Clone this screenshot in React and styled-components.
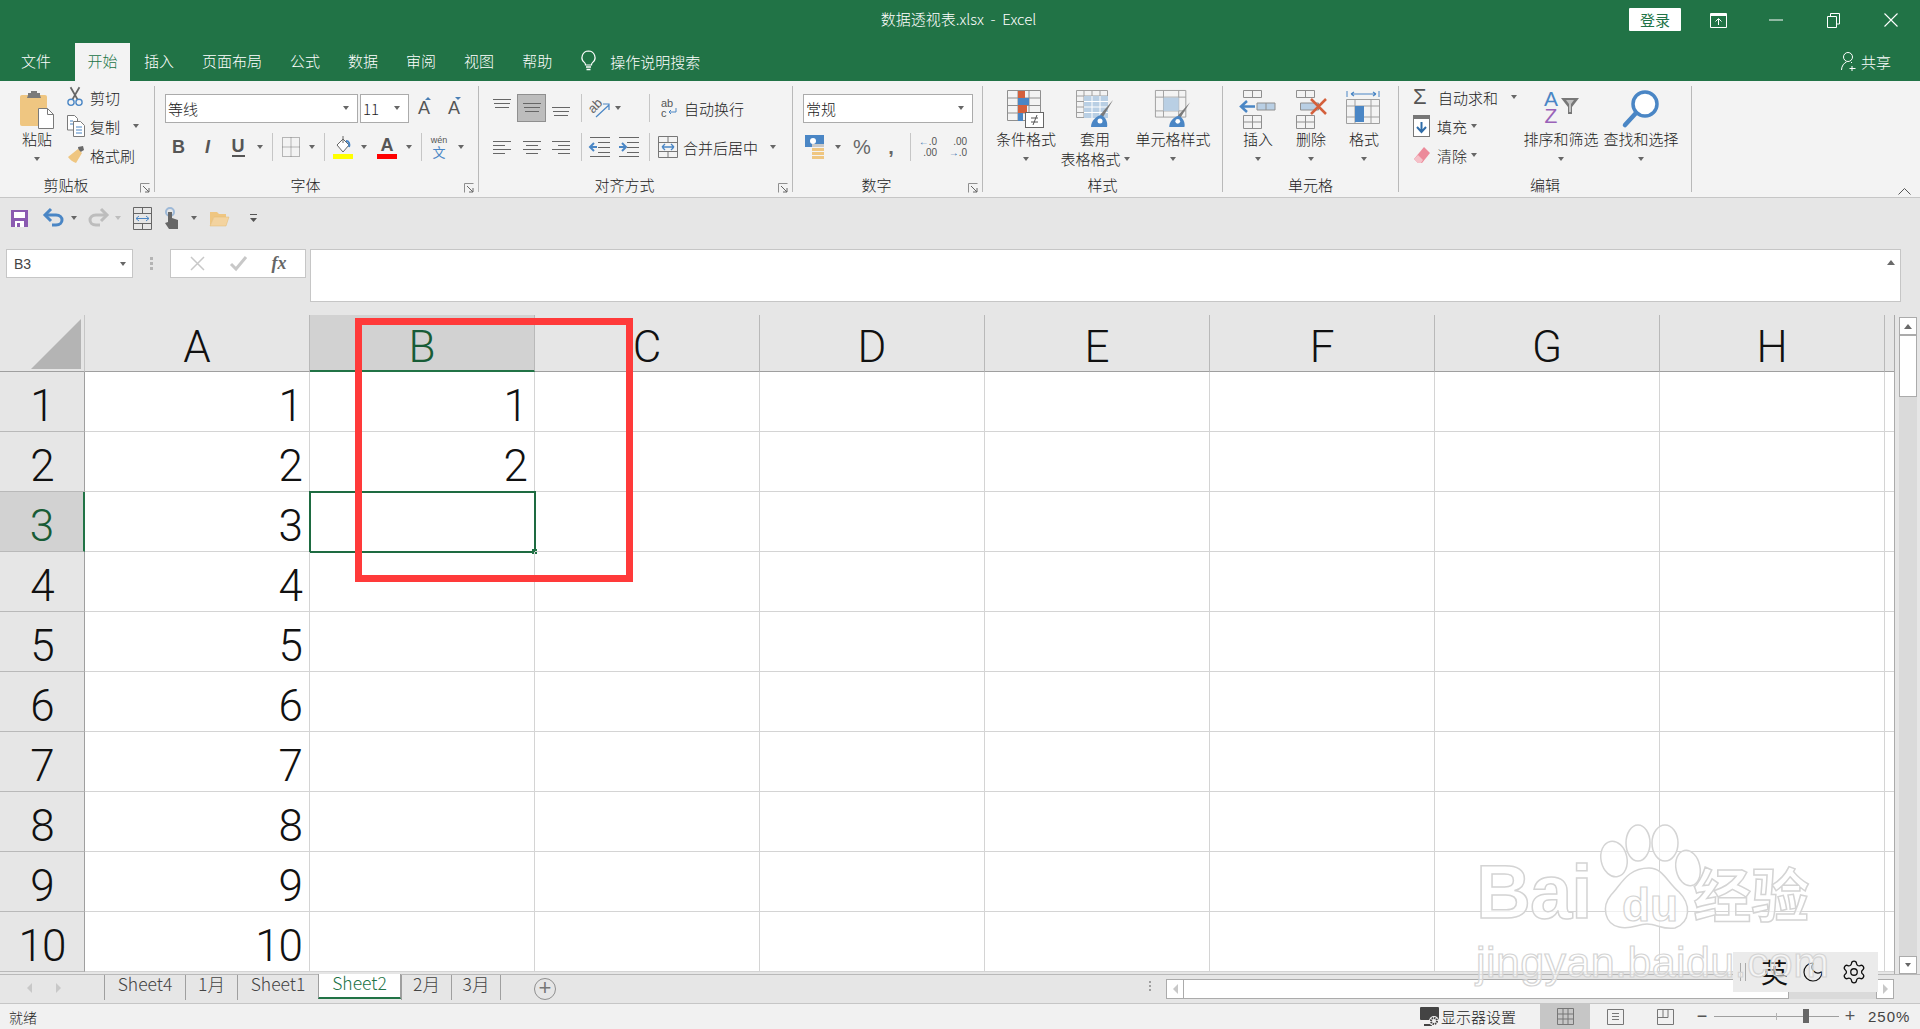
import React from 'react';
import styled, { createGlobalStyle } from 'styled-components';
import { Settings, Moon } from 'lucide-react';

const GlobalStyle = createGlobalStyle`
  html, body { margin: 0; padding: 0; background: #e6e6e6; }
  body { font-family: "Noto Sans CJK SC", "Liberation Sans", sans-serif; font-size: 15px; color: #222; }
  * { box-sizing: border-box; }
  svg { display: block; flex: none; overflow: visible; }
`;

const Page = styled.div`
  position: relative;
  width: 1920px;
  height: 1029px;
  overflow: hidden;
  display: flex;
  flex-direction: column;
  background: #e6e6e6;
`;

/* title bar */
const TitleBar = styled.header`
  height: 43px;
  background: #217346;
  color: #fff;
  display: flex;
  align-items: flex-start;
  position: relative;
`;
const TitleText = styled.div`
  width: 1630px;
  padding-left: 288px;
  text-align: center;
  line-height: 20px;
  padding-top: 9px;
  font-size: 15px;
  font-weight: 300;
  white-space: pre;
`;
const Login = styled.button`
  width: 52px;
  height: 23px;
  margin-top: 8px;
  border: 0;
  border-radius: 1px;
  background: #fff;
  color: #217346;
  font: inherit;
  line-height: 23px;
  padding: 0;
`;
const WinButtons = styled.div`
  display: flex;
  margin-left: 9px;
  margin-top: 8px;
`;
const WinButton = styled.div`
  width: 57.5px;
  height: 24px;
  display: flex;
  align-items: center;
  justify-content: center;
`;

/* tabs */
const TabRow = styled.nav`
  height: 38px;
  background: #217346;
  display: flex;
  padding-left: 7px;
  color: #fff;
`;
const Tab = styled.div`
  height: 38px;
  line-height: 35px;
  padding: 0 ${p => (p.$active ? 12.5 : 14)}px;
  margin-right: ${p => p.$mr || 0}px;
  background: ${p => (p.$active ? '#f3f3f3' : 'transparent')};
  color: ${p => (p.$active ? '#217346' : '#fff')};
  font-weight: 300;
  flex: none;
`;
const SearchHint = styled.div`
  display: flex;
  align-items: center;
  gap: 14px;
  margin-left: 15px;
  height: 36px;
  font-weight: 300;
`;
const Share = styled.div`
  margin-left: auto;
  margin-right: 29px;
  display: flex;
  align-items: center;
  gap: 4px;
  height: 36px;
  font-weight: 300;
`;

/* ribbon */
const Ribbon = styled.div`
  height: 117px;
  background: #f3f3f3;
  border-bottom: 1px solid #c6c6c6;
  padding-top: 5px;
  display: flex;
  flex: none;
`;
const Group = styled.section`
  position: relative;
  flex: none;
  width: ${p => p.$w}px;
  height: 106px;
  border-right: 1px solid #b9b9b9;
  display: flex;
  flex-direction: column;
`;
const Tools = styled.div`
  height: 90px;
  padding-left: ${p => p.$pad || 0}px;
  padding-top: ${p => p.$top || 0}px;
  display: flex;
  flex-direction: ${p => (p.$col ? 'column' : 'row')};
  gap: ${p => (p.$col ? 11 : 0)}px;
`;
const GroupLabel = styled.div`
  height: 16px;
  line-height: 18px;
  text-align: center;
  font-weight: 300;
  padding-right: ${p => (p.$launcher ? 22 : 0)}px;
`;
const Launcher = styled.div`
  position: absolute;
  right: 4px;
  bottom: -1px;
  width: 10px;
  height: 10px;
`;
const Row = styled.div`
  display: flex;
  align-items: center;
  height: 28px;
`;
const Slot = styled.div`
  flex: none;
  width: ${p => p.$w}px;
  height: 28px;
  display: flex;
  align-items: center;
  justify-content: center;
  color: #555;
  background: ${p => (p.$on ? '#bdbdbd' : 'transparent')};
  border: ${p => (p.$on ? '1px solid #8f8f8f' : '0')};
`;
const Caret = styled.i`
  display: block;
  flex: none;
  width: 0;
  height: 0;
  border-left: 3.5px solid transparent;
  border-right: 3.5px solid transparent;
  border-top: 4px solid ${p => (p.$faint ? '#bdbdbd' : '#666')};
`;
const Sep = styled.div`
  flex: none;
  width: ${p => p.$w}px;
  height: 28px;
  display: flex;
  justify-content: center;
  &::before {
    content: '';
    width: 1px;
    background: #c6c6c6;
  }
`;
const Select = styled.div`
  flex: none;
  width: ${p => p.$w}px;
  height: 29px;
  margin-right: ${p => p.$mr || 0}px;
  background: #fff;
  border: 1px solid #ababab;
  display: flex;
  align-items: center;
  justify-content: space-between;
  padding: 0 8px 0 2px;
  font-weight: 300;
`;
const BigButton = styled.div`
  flex: none;
  width: ${p => p.$w}px;
  padding-top: 4px;
  display: flex;
  flex-direction: column;
  align-items: center;
  font-weight: 300;
`;
const BigIcon = styled.div`
  height: 39px;
  display: flex;
  align-items: flex-start;
  justify-content: center;
`;
const BigLabel = styled.div`
  line-height: 20px;
  text-align: center;
  white-space: nowrap;
  display: flex;
  align-items: center;
  gap: 3px;
`;
const CaretLine = styled.div`
  height: 18px;
  margin-top: 1px;
  display: flex;
  align-items: center;
`;
const Stack = styled.div`
  flex: none;
  width: ${p => p.$w}px;
  margin: -1px 0 0 ${p => p.$ml || 0}px;
  display: flex;
  flex-direction: column;
  gap: 5px;
`;
const SmallRow = styled.div`
  height: 24px;
  display: flex;
  align-items: center;
  font-weight: 300;
`;
const SmallIcon = styled.div`
  flex: none;
  width: ${p => p.$w || 23}px;
  display: flex;
  justify-content: flex-start;
`;
const CaretGap = styled.span`
  display: block;
  margin-left: ${p => p.$ml || 4}px;
`;
const WrapText = styled.span`
  margin-left: ${p => p.$ml || 2}px;
  font-weight: 300;
  white-space: nowrap;
  color: #222;
`;
const FontBtn = styled.span`
  font-family: "Liberation Sans", sans-serif;
  font-weight: 700;
  font-size: 18px;
  font-style: ${p => (p.$i ? 'italic' : 'normal')};
  border-bottom: ${p => (p.$u ? '2px solid #555' : '0')};
  line-height: ${p => (p.$u ? '17px' : '20px')};
  color: #555;
`;
const GrowA = styled.span`
  position: relative;
  font-family: "Liberation Sans", sans-serif;
  font-size: 18px;
  color: #555;
  &::after {
    content: '';
    position: absolute;
    top: -1px;
    right: -1px;
    border-left: 3px solid transparent;
    border-right: 3px solid transparent;
    ${p => (p.$down ? 'border-top: 3px solid #4a7fb5;' : 'border-bottom: 3px solid #4a7fb5;')}
  }
`;
const ColorPick = styled.div`
  width: 20px;
  display: flex;
  flex-direction: column;
  align-items: center;
  font-family: "Liberation Sans", sans-serif;
  font-weight: 700;
  font-size: 18px;
  line-height: 18px;
  color: #555;
  &::after {
    content: '';
    width: 20px;
    height: 5px;
    background: ${p => p.$color};
  }
`;
const Wen = styled.div`
  display: flex;
  flex-direction: column;
  align-items: center;
  color: #4a86c5;
  font-size: 13px;
  line-height: 14px;
  small {
    font-size: 9px;
    line-height: 9px;
    color: #555;
    font-family: "Liberation Sans", sans-serif;
  }
`;
const NumSign = styled.span`
  font-family: "Liberation Sans", sans-serif;
  font-size: ${p => p.$s || 19}px;
  font-weight: ${p => p.$b || 400};
  color: #666;
`;
const Decimal = styled.div`
  font-family: "Liberation Sans", sans-serif;
  font-size: 10px;
  line-height: 11px;
  color: #555;
  text-align: right;
  b { font-weight: 700; color: #4a7fb5; font-size: 10px; }
  em { font-weight: 700; font-style: normal; color: #2f6ca8; font-size: 10px; }
`;
const Sigma = styled.span`
  font-family: "Liberation Sans", sans-serif;
  font-size: 22px;
  line-height: 24px;
  color: #555;
`;
const Collapse = styled.div`
  margin-left: auto;
  margin-right: 9px;
  align-self: flex-end;
  margin-bottom: 2px;
`;

/* quick access */
const QuickBar = styled.div`
  height: 40px;
  padding-left: 7px;
  display: flex;
  align-items: center;
  flex: none;
`;
const QuickSlot = styled.div`
  flex: none;
  width: ${p => p.$w}px;
  margin-left: ${p => p.$ml || 0}px;
  display: flex;
  align-items: center;
  justify-content: center;
`;

/* formula bar */
const FormulaRow = styled.div`
  height: 53px;
  margin: 11px 0 13px;
  padding-left: 6px;
  display: flex;
  align-items: flex-start;
  flex: none;
`;
const NameBox = styled.div`
  width: 127px;
  height: 29px;
  background: #fff;
  border: 1px solid #c6c6c6;
  display: flex;
  align-items: center;
  justify-content: space-between;
  padding: 0 6px 0 7px;
  font-family: "Liberation Sans", sans-serif;
  font-size: 14px;
  color: #444;
`;
const Dots = styled.div`
  width: 37px;
  height: 29px;
  display: flex;
  flex-direction: column;
  align-items: center;
  justify-content: center;
  gap: 2px;
  i {
    width: 3px;
    height: 3px;
    background: #b4b4b4;
  }
`;
const FxBox = styled.div`
  width: 136px;
  height: 29px;
  background: #fff;
  border: 1px solid #c6c6c6;
  display: flex;
  align-items: center;
  justify-content: space-around;
  padding: 0 6px;
  font-family: "Liberation Serif", serif;
  font-style: italic;
  font-weight: 700;
  font-size: 18px;
  color: #666;
`;
const FormulaInput = styled.div`
  width: 1591px;
  height: 53px;
  margin-left: 4px;
  background: #fff;
  border: 1px solid #c6c6c6;
  display: flex;
  justify-content: flex-end;
  padding: 10px 5px 0 0;
`;
const UpCaret = styled.i`
  display: block;
  width: 0;
  height: 0;
  border-left: 4.5px solid transparent;
  border-right: 4.5px solid transparent;
  border-bottom: 5px solid #6a6a6a;
`;

/* sheet */
const SheetArea = styled.div`
  height: 659px;
  display: flex;
  flex: none;
`;
const Grid = styled.div`
  width: 1895px;
  height: 659px;
  border-right: 1px solid #ababab;
  overflow: hidden;
`;
const GridRow = styled.div`
  display: flex;
  height: ${p => (p.$head ? 57 : 60)}px;
  background: ${p => (p.$head ? '#e6e6e6' : '#fff')};
`;
const Corner = styled.div`
  flex: none;
  width: 85px;
  height: 57px;
  border-right: 1px solid #c6c6c6;
  border-bottom: 1px solid #9f9f9f;
  padding: 4px 0 0 31px;
`;
const ColHead = styled.div`
  flex: none;
  width: ${p => p.$w || 225}px;
  height: 57px;
  padding-top: 7px;
  text-align: center;
  line-height: 50px;
  font-size: 44px;
  font-family: Roboto, "Liberation Sans", sans-serif;
  font-weight: 300;
  color: ${p => (p.$sel ? '#185c36' : '#111')};
  background: ${p => (p.$sel ? '#d2d2d2' : 'transparent')};
  border-right: 1px solid #b9b9b9;
  border-bottom: ${p => (p.$sel ? '2px solid #217346' : '1px solid #9f9f9f')};
`;
const RowHead = styled.div`
  flex: none;
  width: 85px;
  height: 60px;
  text-align: center;
  line-height: 60px;
  padding-top: 4px;
  font-size: 44px;
  font-family: Roboto, "Liberation Sans", sans-serif;
  font-weight: 300;
  letter-spacing: -1px;
  color: ${p => (p.$sel ? '#185c36' : '#111')};
  background: ${p => (p.$sel ? '#d2d2d2' : '#e6e6e6')};
  border-right: ${p => (p.$sel ? '2px solid #217346' : '1px solid #9f9f9f')};
  border-bottom: 1px solid #b9b9b9;
`;
const Cell = styled.div`
  position: relative;
  flex: none;
  width: ${p => p.$w || 225}px;
  height: 60px;
  padding: 4px 7px 0 0;
  text-align: right;
  line-height: 60px;
  font-size: 44px;
  font-family: Roboto, "Liberation Sans", sans-serif;
  font-weight: 300;
  letter-spacing: -1px;
  color: #111;
  border-right: 1px solid #d4d4d4;
  border-bottom: 1px solid #d4d4d4;
`;
const Selection = styled.div`
  position: absolute;
  left: -1px;
  top: -1px;
  width: 227px;
  height: 62px;
  border: 2px solid #1e6b41;
  &::after {
    content: '';
    position: absolute;
    right: -3px;
    bottom: -3px;
    width: 5px;
    height: 5px;
    background: #217346;
  }
`;
const VScroll = styled.div`
  flex: none;
  width: 18px;
  height: 657px;
  margin: 2px 0 0 4px;
  background: #dadada;
  display: flex;
  flex-direction: column;
`;
const ScrollBtn = styled.div`
  flex: none;
  width: ${p => p.$w || 18}px;
  height: ${p => p.$h || 18}px;
  background: #fff;
  border: 1px solid #ababab;
  display: flex;
  align-items: center;
  justify-content: center;
`;
const VThumb = styled.div`
  width: 18px;
  height: 62px;
  background: #fff;
  border: 1px solid #ababab;
  margin-bottom: auto;
`;

/* sheet tabs */
const TabBar = styled.div`
  height: 29px;
  flex: none;
  border-top: 1px solid #b9b9b9;
  display: flex;
  align-items: flex-start;
`;
const SheetNav = styled.div`
  width: 104px;
  height: 25px;
  padding-left: 27px;
  display: flex;
  align-items: center;
  gap: 24px;
  flex: none;
`;
const NavArrow = styled.i`
  display: block;
  width: 0;
  height: 0;
  border-top: 5px solid transparent;
  border-bottom: 5px solid transparent;
  ${p => (p.$left ? 'border-right: 5px solid #c8c8c8;' : 'border-left: 5px solid #c8c8c8;')}
`;
const SheetTab = styled.div`
  flex: none;
  width: ${p => p.$w}px;
  height: 25px;
  text-align: center;
  line-height: 18px;
  font-size: 17.5px;
  font-weight: 300;
  color: ${p => (p.$active ? '#217346' : '#444')};
  background: ${p => (p.$active ? '#fff' : 'transparent')};
  border-left: 1px solid #9f9f9f;
  border-right: ${p => (p.$last || p.$active ? '1px solid #9f9f9f' : '0')};
  border-bottom: ${p => (p.$active ? '2px solid #217346' : '0')};
  margin-top: ${p => (p.$active ? -1 : 0)}px;
`;
const AddSheet = styled.div`
  flex: none;
  margin: 3px 0 0 33px;
  width: 22px;
  height: 22px;
  border-radius: 50%;
  border: 1px solid #8f8f8f;
  color: #777;
  text-align: center;
  line-height: 18px;
  font-family: "Liberation Sans", sans-serif;
  font-size: 22px;
`;
const SplitDots = styled.div`
  margin-left: 585px;
  margin-top: 6px;
  display: flex;
  flex-direction: column;
  gap: 2px;
  width: 25px;
  padding-right: 7px;
  align-items: center;
  i {
    width: 2px;
    height: 2px;
    background: #9f9f9f;
  }
`;
const HScroll = styled.div`
  margin-left: 0;
  margin-top: 4px;
  width: 728px;
  height: 20px;
  display: flex;
  background: #dadada;
`;
const HThumb = styled.div`
  width: 605px;
  height: 20px;
  background: #fff;
  border: 1px solid #ababab;
  border-left: 0;
  margin-right: auto;
`;

/* status bar */
const StatusBar = styled.footer`
  height: 26px;
  flex: none;
  background: #f1f1f1;
  border-top: 1px solid #c6c6c6;
  display: flex;
  align-items: center;
  padding-left: 9px;
  font-weight: 300;
`;
const Ready = styled.div`
  width: 1411px;
  font-size: 14px;
`;
const Display = styled.div`
  width: 120px;
  display: flex;
  align-items: center;
  gap: 1px;
  white-space: nowrap;
`;
const ViewBtn = styled.div`
  flex: none;
  width: ${p => p.$w || 50}px;
  height: 25px;
  background: ${p => (p.$on ? '#c6c6c6' : 'transparent')};
  display: flex;
  align-items: center;
  justify-content: center;
`;
const ZoomSign = styled.div`
  flex: none;
  width: ${p => p.$w}px;
  text-align: center;
  font-family: "Liberation Sans", sans-serif;
  font-size: 18px;
  color: #555;
`;
const Slider = styled.div`
  position: relative;
  flex: none;
  width: 125px;
  height: 1px;
  background: #9f9f9f;
  &::before {
    content: '';
    position: absolute;
    left: 62px;
    top: -3px;
    width: 1px;
    height: 7px;
    background: #b4b4b4;
  }
  &::after {
    content: '';
    position: absolute;
    left: 89px;
    top: -7px;
    width: 6px;
    height: 14px;
    background: #666;
  }
`;
const ZoomValue = styled.div`
  margin-left: 7px;
  font-family: "Liberation Sans", sans-serif;
  font-size: 15px;
  letter-spacing: 1px;
  color: #444;
`;

/* overlays */
const RedFrame = styled.div`
  position: absolute;
  left: 355px;
  top: 318px;
  width: 278px;
  height: 264px;
  border: 7px solid #ff3a3a;
`;
const ImeBar = styled.div`
  position: absolute;
  left: 1733px;
  top: 952px;
  width: 145px;
  height: 40px;
  background: #ebebeb;
  display: flex;
  align-items: center;
  padding-left: 7px;
  color: #111;
`;
const ImeBars = styled.div`
  width: 6px;
  height: 18px;
  border-left: 1px solid #aaa;
  border-right: 1px solid #aaa;
`;
const ImeChar = styled.div`
  margin-left: 15px;
  width: 40px;
  font-size: 27px;
  line-height: 40px;
`;
const ImeIcon = styled.div`
  margin-left: ${p => p.$ml}px;
`;
const Watermark = styled.div`
  position: absolute;
  left: 1476px;
  top: 824px;
  width: 345px;
  height: 165px;
  pointer-events: none;
`;
const MarkLogo = styled.div`
  display: flex;
  align-items: flex-end;
  height: 108px;
`;
const MarkLatin = styled.div`
  font-family: "Liberation Sans", sans-serif;
  font-weight: 700;
  font-size: 76px;
  line-height: 80px;
  letter-spacing: -1px;
  color: rgba(255, 255, 255, 0.65);
  -webkit-text-stroke: 1.5px #d4d4d4;
`;
const MarkCjk = styled.div`
  font-family: "Noto Sans CJK SC", sans-serif;
  font-weight: 700;
  font-size: 58px;
  line-height: 80px;
  margin-left: -10px;
  color: rgba(255, 255, 255, 0.65);
  -webkit-text-stroke: 1.5px #d4d4d4;
`;
const MarkUrl = styled.div`
  margin-top: 8px;
  font-family: "Liberation Sans", sans-serif;
  font-size: 43px;
  line-height: 44px;
  letter-spacing: 0.4px;
  white-space: nowrap;
  color: rgba(255, 255, 255, 0.55);
  -webkit-text-stroke: 1.2px #d4d4d4;
`;

/* icons */
const G = '#7a7a7a';
const B = '#4a86c5';

const PasteIcon = () => (
  <svg width="36" height="40" viewBox="0 0 36 40">
    <rect x="1" y="5" width="27" height="31" rx="2" fill="#efc681" />
    <path d="M9 5V3h3V1h6v2h3v2l1 3H8z" fill={G} />
    <path d="M19.500 18.500h9l6 6v14h-15z" fill="#fff" stroke={G} />
    <path d="M28.500 18.500v6h6" fill="none" stroke={G} />
  </svg>
);
const ScissorsIcon = () => (
  <svg width="16" height="22" viewBox="0 0 18 24">
    <path d="M4 1l8 14M14 1L6 15" stroke="#666" strokeWidth="2" fill="none" />
    <circle cx="4.500" cy="18" r="3.500" fill="none" stroke={B} strokeWidth="1.500" />
    <circle cx="13.500" cy="18" r="3.500" fill="none" stroke={B} strokeWidth="1.500" />
  </svg>
);
const CopyIcon = () => (
  <svg width="18" height="22" viewBox="0 0 18 22">
    <path d="M.5.5h7l3 3V15H.5z" fill="#fff" stroke={G} />
    <path d="M6.500 6.500h7l4 4v11h-11z" fill="#fff" stroke={G} />
    <path d="M3 6h3M3 9h3M9 12h6M9 15h6M9 18h6" stroke={B} />
  </svg>
);
const BrushIcon = () => (
  <svg width="18" height="20" viewBox="0 0 18 20">
    <path d="M11 2l5-1 1 4-5 3z" fill="#6a6a6a" />
    <path d="M11 4l4 4-6 10c-3-1-6-3-8-6z" fill="#efc681" />
  </svg>
);
const BorderIcon = () => (
  <svg width="18" height="20" viewBox="0 0 18 20">
    <path d="M.5.500h17v19H.5zM9 .5v19M.5 10h17" fill="none" stroke="#777" strokeDasharray="1 1" />
  </svg>
);
const FillIcon = () => (
  <svg width="20" height="24" viewBox="0 0 20 24">
    <path d="M4 10l6-6 6 6-6 7z" fill="#fff" stroke="#666" />
    <path d="M10 1v7" stroke="#666" />
    <path d="M13 6c3 0 4 3 3 6" stroke={B} strokeWidth="2" fill="none" />
    <rect y="19" width="20" height="5" fill="#ffff00" />
  </svg>
);
const LinesIcon = ({ mode = 'center', w = 18 }) => {
  const wid = [w, w - 6, w, w - 6];
  return (
    <svg width={w} height="14" viewBox={`0 0 ${w} 14`}>
      {wid.map((v, i) => {
        const x = mode === 'left' ? 0 : mode === 'right' ? w - v : (w - v) / 2;
        return <rect key={i} x={x} y={i * 4 + 1} width={v} height="1" fill="#666" />;
      })}
    </svg>
  );
};
const StackLines = ({ offset = 0, w = 18 }) => (
  <svg width={w} height="26" viewBox={`0 0 ${w} 26`}>
    {[0, 1, 2].map(i => (
      <rect key={i} x={i === 1 ? 1 : i === 2 ? 2 : 0} y={offset + i * 4} width={i === 2 ? w - 4 : i === 1 ? w - 2 : w} height="1" fill="#666" />
    ))}
  </svg>
);
const OrientIcon = () => (
  <svg width="24" height="22" viewBox="0 0 24 22">
    <text x="3" y="14" fontSize="13" fontFamily="Liberation Sans" fill="#666" transform="rotate(-45 8 12)">ab</text>
    <path d="M9 20L22 8M16 7h6v6" stroke={B} fill="none" strokeWidth="1.200" />
  </svg>
);
const IndentIcon = ({ right }) => (
  <svg width="20" height="20" viewBox="0 0 20 20">
    <path d="M0 .5h20M8 5.500h12M8 10.500h12M8 15.500h12M0 19.500h20" stroke="#666" />
    <path d={right ? 'M0 10h6M3 6l4 4-4 4' : 'M7 10H1M4 6l-4 4 4 4'} stroke={B} strokeWidth="2" fill="none" />
  </svg>
);
const MergeIcon = () => (
  <svg width="20" height="22" viewBox="0 0 20 22">
    <path d="M.5.500h19v21H.5zM.5 6.500h19M.5 15.500h19M10 .5v6M10 15.500v6" fill="none" stroke="#777" />
    <path d="M4 11h12M4 11l3-3M4 11l3 3M16 11l-3-3M16 11l-3 3" stroke={B} strokeWidth="1.300" fill="none" />
  </svg>
);
const WrapIcon = () => (
  <svg width="18" height="20" viewBox="0 0 18 20">
    <text x="1" y="9" fontSize="11" fontFamily="Liberation Sans" fill="#555">ab</text>
    <text x="1" y="19" fontSize="11" fontFamily="Liberation Sans" fill="#555">c</text>
    <path d="M16 10v4H9M11 12l-2 2 2 2" stroke={B} fill="none" />
  </svg>
);
const MoneyIcon = () => (
  <svg width="20" height="24" viewBox="0 0 20 24">
    <rect width="19" height="12" fill={B} />
    <circle cx="8" cy="6" r="3" fill="#fff" />
    <rect x="7" y="9" width="12" height="3" fill="#c9c9c9" />
    <rect x="7" y="13" width="12" height="3" fill="#efc681" />
    <rect x="7" y="17" width="12" height="3" fill="#efc681" />
    <rect x="7" y="21" width="12" height="3" fill="#efc681" />
  </svg>
);
const CondIcon = () => (
  <svg width="38" height="38" viewBox="0 0 38 38">
    <path d="M.5.500h33v30H.5zM.5 8h33M.5 15.500h33M.5 23h33M11 .5v30M22 .5v30" fill="none" stroke="#8f8f8f" />
    <rect x="11" y="1" width="7" height="7" fill="#d4603c" />
    <rect x="11" y="8" width="11" height="7" fill={B} />
    <rect x="11" y="15" width="9" height="8" fill="#d4603c" />
    <rect x="11" y="23" width="5" height="8" fill={B} />
    <rect x="18.500" y="22.500" width="18" height="15" fill="#fff" stroke="#666" />
    <path d="M24 32h7M24 28h7M30 25l-4 10" stroke="#555" fill="none" />
  </svg>
);
const TableIcon = () => (
  <svg width="38" height="38" viewBox="0 0 38 38">
    <path d="M.5.500h31v27H.5zM.5 6h31M.5 11.500h31M.5 17h31M.5 22.500h31M8 .5v27M16 .5v27M24 .5v27" fill="none" stroke="#9f9f9f" />
    <rect x="8" y="6" width="24" height="22" fill="#b9cfe4" />
    <path d="M16 6v22M24 6v22M8 11.500h24M8 17h24M8 22.500h24" stroke="#fff" />
    <path d="M37 10L27 27l-3-2z" fill={G} />
    <path d="M25 25c-5 1-10 6-10 12h16c1-4-1-10-6-12z" fill={B} />
    <circle cx="24" cy="31" r="2.500" fill="#fff" />
  </svg>
);
const CellStyleIcon = () => (
  <svg width="38" height="38" viewBox="0 0 38 40">
    <path d="M.5.500h32v28H.5zM.5 7.500h32M.5 22h32M9 .5v28M25 .5v28" fill="none" stroke="#9f9f9f" />
    <rect x="9" y="8" width="16" height="14" fill="#b9cfe4" />
    <path d="M37 13L27 29l-3-2z" fill={G} />
    <path d="M25 27c-5 1-10 6-10 12h16c1-4-1-10-6-12z" fill={B} />
    <circle cx="24" cy="33" r="2.500" fill="#fff" />
  </svg>
);
const CellTiles = () => (
  <path d="M3.500.5h18v7h-18zM12.500.5v7M3.500 25.500h18v13h-18zM3.500 32h18M12.500 25.500v13" fill="none" stroke="#8f8f8f" />
);
const InsertIcon = () => (
  <svg width="36" height="39" viewBox="0 0 36 39">
    <CellTiles />
    <path d="M17 13h18v7H17zM26 13v7" fill="#b9cfe4" stroke="#8f8f8f" />
    <path d="M15 16.500H2M7 11l-6 5.500L7 22" stroke={B} strokeWidth="2.500" fill="none" />
  </svg>
);
const DeleteIcon = () => (
  <svg width="36" height="39" viewBox="0 0 36 39">
    <CellTiles />
    <path d="M7.500 13h18v7h-18z" fill="#b9cfe4" stroke="#8f8f8f" />
    <path d="M18 9l15 15M33 9L18 24" stroke="#d4603c" strokeWidth="2.500" />
  </svg>
);
const FormatIcon = () => (
  <svg width="36" height="39" viewBox="0 0 36 39">
    <path d="M1 1v6M33 1v6" stroke={B} />
    <path d="M5 4h25M5 4l3-2M5 4l3 2M30 4l-3-2M30 4l-3 2" stroke={B} strokeWidth="1.200" fill="none" />
    <path d="M.5 9.500h33v24H.5zM.5 16h33M.5 27h33M9 9.500v24M25 9.500v24" fill="none" stroke="#9f9f9f" />
    <rect x="9" y="16" width="9" height="16" fill={B} />
  </svg>
);
const FillDownIcon = () => (
  <svg width="17" height="22" viewBox="0 0 17 22">
    <rect x=".5" y=".5" width="16" height="21" fill="#fff" stroke="#777" />
    <rect x="1" y="1" width="15" height="3" fill="#777" />
    <path d="M8.500 7v10M4 12l4.500 5 4.500-5" stroke="#2f6ca8" strokeWidth="2" fill="none" />
  </svg>
);
const EraserIcon = () => (
  <svg width="18" height="18" viewBox="0 0 18 18">
    <path d="M11 1l6 6-8 10H5l-4-4z" fill="#ec8a9a" />
    <path d="M1 13l4-4 5 5-2 3H5z" fill="#f5c0c8" />
  </svg>
);
const SortLetters = styled.div`
  width: 17px;
  height: 34px;
  display: flex;
  flex-direction: column;
  align-items: center;
  font-family: "Liberation Sans", sans-serif;
  font-size: 21px;
  line-height: 17px;
  span:first-child { color: ${B}; }
  span:last-child { color: #9a62b8; }
`;
const SortIcon = () => (
  <svg width="20" height="26" viewBox="0 0 20 26">
    <path d="M1 8h18l-7 9v7H8v-7z" fill="#777" />
    <path d="M6 10h8l-3 4v8H9v-8z" fill="#f3f3f3" opacity=".6" />
  </svg>
);
const FindIcon = () => (
  <svg width="36" height="38" viewBox="0 0 36 38">
    <circle cx="22" cy="14" r="12" fill="#fff" stroke={B} strokeWidth="3.500" />
    <path d="M13 23L2 35" stroke={B} strokeWidth="4.500" strokeLinecap="round" />
  </svg>
);
const SaveIcon = () => (
  <svg width="17" height="17" viewBox="0 0 17 17">
    <path d="M0 0h17v17H0z" fill="#8a5ab0" />
    <rect x="3" y="2" width="11" height="6" fill="#fff" />
    <rect x="4" y="11" width="9" height="6" fill="#fff" />
    <rect x="6" y="13" width="3" height="4" fill="#8a5ab0" />
  </svg>
);
const UndoIcon = ({ color, flip }) => (
  <svg width="20" height="18" viewBox="0 0 20 18" style={flip ? { transform: 'scaleX(-1)' } : undefined}>
    <path d="M2 6h10c8 0 8 10 0 10H8" stroke={color} strokeWidth="3" fill="none" />
    <path d="M7 0L1 6l6 6" stroke={color} strokeWidth="3" fill="none" />
  </svg>
);
const TouchIcon = () => (
  <svg width="16" height="22" viewBox="0 0 16 22">
    <circle cx="6" cy="5" r="4" fill="none" stroke="#9db9d8" strokeWidth="2" />
    <path d="M4 5h4v6l6 2v9H5l-4-6 3-1z" fill="#666" />
  </svg>
);
const FolderIcon = () => (
  <svg width="19" height="16" viewBox="0 0 19 16">
    <path d="M0 2h7l2 2h7v3H4L0 16z" fill="#efc681" />
    <path d="M4 7h15l-3 9H0z" fill="#f3d39f" stroke="#e3b870" strokeWidth=".5" />
  </svg>
);
const MiniFit = () => (
  <svg width="19" height="23" viewBox="0 0 19 23">
    <path d="M.5.500h18v22H.5zM.5 6.500h18M.5 16.500h18M9.500.5v6M9.500 16.500v6" fill="none" stroke="#666" />
    <path d="M3 11.500h13M3 11.500l3-2.500M3 11.500l3 2.500M16 11.500l-3-2.500M16 11.500l-3 2.500" stroke={B} fill="none" />
  </svg>
);
const CustomizeIcon = () => (
  <svg width="7" height="9" viewBox="0 0 7 9">
    <path d="M0 .5h7" stroke="#555" />
    <path d="M0 4h7L3.500 8z" fill="#555" />
  </svg>
);
const Launch = () => (
  <svg width="10" height="10" viewBox="0 0 10 10">
    <path d="M.5 9.500v-9h9" fill="none" stroke="#8f8f8f" />
    <path d="M3 3l6 6M9 5v4H5" fill="none" stroke="#666" />
  </svg>
);
const BulbIcon = () => (
  <svg width="15" height="22" viewBox="0 0 15 22">
    <path d="M7.500 1a6.500 6.500 0 0 0-4 11.600c.8.700 1 1.400 1 2.400h6c0-1 .2-1.700 1-2.400A6.500 6.500 0 0 0 7.500 1z" fill="none" stroke="#fff" strokeWidth="1.200" />
    <path d="M5 17h5M5.500 19.500h4" stroke="#fff" strokeWidth="1.400" />
  </svg>
);
const ShareIcon = () => (
  <svg width="16" height="20" viewBox="0 0 16 20">
    <circle cx="7" cy="6" r="4.500" fill="none" stroke="#fff" />
    <path d="M.5 19c0-4 2.500-7 5-8M10 11l1 1M11 15v5M8.500 17.500h6" fill="none" stroke="#fff" />
  </svg>
);
const RibbonBoxIcon = () => (
  <svg width="17" height="15" viewBox="0 0 17 15">
    <path d="M.5.500h16v14H.5z" fill="none" stroke="#fff" />
    <rect x="1" y="1" width="15" height="2" fill="#fff" />
    <path d="M8.500 12V6M5.500 8.500l3-3 3 3" fill="none" stroke="#fff" />
  </svg>
);
const MinIcon = () => (
  <svg width="14" height="2" viewBox="0 0 14 2"><path d="M0 1h14" stroke="#fff" /></svg>
);
const RestoreIcon = () => (
  <svg width="13" height="15" viewBox="0 0 13 15">
    <path d="M.5 3.500h9v11h-9zM3.500 3V.5h9V11H10" fill="none" stroke="#fff" />
  </svg>
);
const CloseIcon = () => (
  <svg width="14" height="14" viewBox="0 0 14 14">
    <path d="M.5.5l13 13M13.500.5l-13 13" stroke="#fff" strokeWidth="1.100" />
  </svg>
);
const Chevron = () => (
  <svg width="13" height="7" viewBox="0 0 13 7">
    <path d="M.5 6.500l6-6 6 6" fill="none" stroke="#555" />
  </svg>
);
const CrossMark = () => (
  <svg width="15" height="15" viewBox="0 0 15 15">
    <path d="M1 1l13 13M14 1L1 14" stroke="#c8c8c8" strokeWidth="1.500" />
  </svg>
);
const CheckMark = () => (
  <svg width="17" height="15" viewBox="0 0 17 15">
    <path d="M1 8l5 5L16 1" stroke="#c8c8c8" strokeWidth="3" fill="none" />
  </svg>
);
const CornerMark = () => (
  <svg width="50" height="50" viewBox="0 0 50 50">
    <path d="M50 0v50H0z" fill="#b4b4b4" />
  </svg>
);
const MonitorIcon = () => (
  <svg width="20" height="20" viewBox="0 0 20 20">
    <rect width="19" height="13" rx="1" fill="#444" />
    <path d="M4 17h8v2H4z" fill="#444" />
    <circle cx="14" cy="14" r="5" fill="#f1f1f1" />
    <circle cx="14" cy="14" r="3" fill="none" stroke="#444" strokeWidth="2" strokeDasharray="1.500 .8" />
  </svg>
);
const NormalView = () => (
  <svg width="17" height="17" viewBox="0 0 17 17">
    <path d="M.5.500h16v16H.5zM.5 6h16M.5 11h16M6 .5v16M11 .5v16" fill="none" stroke="#777" />
  </svg>
);
const PageView = () => (
  <svg width="17" height="16" viewBox="0 0 17 16">
    <path d="M.5.500h16v15H.5z" fill="none" stroke="#777" />
    <path d="M5 4.500h7M5 7.500h7M5 10.500h7" stroke="#777" />
  </svg>
);
const BreakView = () => (
  <svg width="17" height="16" viewBox="0 0 17 16">
    <path d="M.5.500h16v15H.5zM6 .5v8H.5M6 8.500h5V.5" fill="none" stroke="#777" />
  </svg>
);
const PawMark = () => (
  <svg width="112" height="108" viewBox="0 0 112 108">
    <g fill="rgba(255,255,255,.65)" stroke="#d4d4d4" strokeWidth="1.500">
      <ellipse cx="23" cy="35" rx="13" ry="18" transform="rotate(-12 23 35)" />
      <ellipse cx="47" cy="19" rx="12" ry="18" />
      <ellipse cx="74" cy="19" rx="13" ry="18" />
      <ellipse cx="97" cy="44" rx="12" ry="18" transform="rotate(-12 97 44)" />
      <path d="M58 44c14 0 18 14 30 24 12 12 12 30-4 36-12 2-18-4-28-4-10 0-16 6-28 3-14-3-18-20-8-32 10-10 16-27 38-27z" />
    </g>
    <text x="31" y="97" fontSize="46" fontFamily="Liberation Sans" fontWeight="700" fill="rgba(255,255,255,.65)" stroke="#d4d4d4" strokeWidth="1.200">du</text>
  </svg>
);

const tabs = [
  { label: '文件', mr: 10 },
  { label: '开始', active: true },
  { label: '插入' },
  { label: '页面布局' },
  { label: '公式' },
  { label: '数据' },
  { label: '审阅' },
  { label: '视图' },
  { label: '帮助' },
];
const columns = ['A', 'B', 'C', 'D', 'E', 'F', 'G', 'H'];
const rows = [1, 2, 3, 4, 5, 6, 7, 8, 9, 10];
const sheets = [
  { name: 'Sheet4', w: 81 },
  { name: '1月', w: 52 },
  { name: 'Sheet1', w: 81 },
  { name: 'Sheet2', w: 83, active: true },
  { name: '2月', w: 50 },
  { name: '3月', w: 50, last: true },
];

const Big = ({ w, icon, label, children }) => (
  <BigButton $w={w}>
    <BigIcon>{icon}</BigIcon>
    <BigLabel>{label}</BigLabel>
    {children || (
      <CaretLine>
        <Caret />
      </CaretLine>
    )}
  </BigButton>
);

const Clipboard = () => (
  <Group $w={155}>
    <Tools $pad={10}>
      <Big w={54} icon={<PasteIcon />} label="粘贴" />
      <Stack $w={85} $ml={3}>
        <SmallRow><SmallIcon><ScissorsIcon /></SmallIcon>剪切</SmallRow>
        <SmallRow><SmallIcon><CopyIcon /></SmallIcon>复制<CaretGap $ml={13}><Caret /></CaretGap></SmallRow>
        <SmallRow><SmallIcon><BrushIcon /></SmallIcon>格式刷</SmallRow>
      </Stack>
    </Tools>
    <GroupLabel $launcher>剪贴板</GroupLabel>
    <Launcher><Launch /></Launcher>
  </Group>
);

const FontGroup = () => (
  <Group $w={324}>
    <Tools $pad={10} $top={8} $col>
      <Row>
        <Select $w={193} $mr={2}>等线<Caret /></Select>
        <Select $w={49}>11<Caret /></Select>
        <Slot $w={30}><GrowA>A</GrowA></Slot>
        <Slot $w={30}><GrowA $down>A</GrowA></Slot>
      </Row>
      <Row>
        <Slot $w={27}><FontBtn>B</FontBtn></Slot>
        <Slot $w={31}><FontBtn $i>I</FontBtn></Slot>
        <Slot $w={30}><FontBtn $u>U</FontBtn></Slot>
        <Slot $w={14}><Caret /></Slot>
        <Sep $w={10} />
        <Slot $w={28}><BorderIcon /></Slot>
        <Slot $w={14}><Caret /></Slot>
        <Sep $w={10} />
        <Slot $w={28}><FillIcon /></Slot>
        <Slot $w={14}><Caret /></Slot>
        <Slot $w={32}><ColorPick $color="#ff0000">A</ColorPick></Slot>
        <Slot $w={12}><Caret /></Slot>
        <Sep $w={12} />
        <Slot $w={24}><Wen><small>wén</small>文</Wen></Slot>
        <Slot $w={20}><Caret /></Slot>
      </Row>
    </Tools>
    <GroupLabel $launcher>字体</GroupLabel>
    <Launcher><Launch /></Launcher>
  </Group>
);

const AlignGroup = () => (
  <Group $w={314}>
    <Tools $pad={8} $top={8} $col>
      <Row>
        <Slot $w={30}><StackLines offset={4} /></Slot>
        <Slot $w={29} $on><StackLines offset={8} /></Slot>
        <Slot $w={30}><StackLines offset={12} /></Slot>
        <Sep $w={10} />
        <Slot $w={26}><OrientIcon /></Slot>
        <Slot $w={12}><Caret /></Slot>
        <Slot $w={18} />
        <Sep $w={14} />
        <Slot $w={26}><WrapIcon /></Slot>
        <WrapText>自动换行</WrapText>
      </Row>
      <Row>
        <Slot $w={30}><LinesIcon mode="left" /></Slot>
        <Slot $w={29}><LinesIcon /></Slot>
        <Slot $w={30}><LinesIcon mode="right" /></Slot>
        <Sep $w={10} />
        <Slot $w={28}><IndentIcon /></Slot>
        <Slot $w={30}><IndentIcon right /></Slot>
        <Sep $w={10} />
        <Slot $w={28}><MergeIcon /></Slot>
        <WrapText $ml={1}>合并后居中</WrapText>
        <Slot $w={30}><Caret /></Slot>
      </Row>
    </Tools>
    <GroupLabel $launcher>对齐方式</GroupLabel>
    <Launcher><Launch /></Launcher>
  </Group>
);

const NumberGroup = () => (
  <Group $w={190}>
    <Tools $pad={10} $top={8} $col>
      <Row><Select $w={170}>常规<Caret /></Select></Row>
      <Row>
        <Slot $w={24}><MoneyIcon /></Slot>
        <Slot $w={22}><Caret /></Slot>
        <Slot $w={26}><NumSign $s={20}>%</NumSign></Slot>
        <Slot $w={32}><NumSign $s={20} $b={700}>,</NumSign></Slot>
        <Sep $w={6} />
        <Slot $w={30}><Decimal><b>←</b>.0<br />.00</Decimal></Slot>
        <Slot $w={30}><Decimal>.00<br /><em>→</em>.0</Decimal></Slot>
      </Row>
    </Tools>
    <GroupLabel $launcher>数字</GroupLabel>
    <Launcher><Launch /></Launcher>
  </Group>
);

const StylesGroup = () => (
  <Group $w={240}>
    <Tools $pad={8}>
      <Big w={70} icon={<CondIcon />} label="条件格式" />
      <BigButton $w={68}>
        <BigIcon><TableIcon /></BigIcon>
        <BigLabel>套用</BigLabel>
        <BigLabel>表格格式<Caret /></BigLabel>
      </BigButton>
      <Big w={88} icon={<CellStyleIcon />} label="单元格样式" />
    </Tools>
    <GroupLabel>样式</GroupLabel>
  </Group>
);

const CellsGroup = () => (
  <Group $w={176}>
    <Tools $pad={8}>
      <Big w={54} icon={<InsertIcon />} label="插入" />
      <Big w={52} icon={<DeleteIcon />} label="删除" />
      <Big w={54} icon={<FormatIcon />} label="格式" />
    </Tools>
    <GroupLabel>单元格</GroupLabel>
  </Group>
);

const EditGroup = () => (
  <Group $w={293}>
    <Tools $pad={14}>
      <Stack $w={108}>
        <SmallRow><SmallIcon $w={18}><Sigma>Σ</Sigma></SmallIcon><CaretGap $ml={7} />自动求和<CaretGap $ml={13}><Caret /></CaretGap></SmallRow>
        <SmallRow><SmallIcon $w={18}><FillDownIcon /></SmallIcon><CaretGap $ml={6} />填充<CaretGap $ml={4}><Caret /></CaretGap></SmallRow>
        <SmallRow><SmallIcon $w={18}><EraserIcon /></SmallIcon><CaretGap $ml={6} />清除<CaretGap $ml={4}><Caret /></CaretGap></SmallRow>
      </Stack>
      <Big
        w={80}
        icon={
          <>
            <SortLetters><span>A</span><span>Z</span></SortLetters>
            <SortIcon />
          </>
        }
        label="排序和筛选"
      />
      <Big w={80} icon={<FindIcon />} label="查找和选择" />
    </Tools>
    <GroupLabel>编辑</GroupLabel>
  </Group>
);

const App = () => (
  <Page>
    <GlobalStyle />
    <TitleBar>
      <TitleText>{'数据透视表.xlsx  -  Excel'}</TitleText>
      <Login>登录</Login>
      <WinButtons>
        <WinButton><RibbonBoxIcon /></WinButton>
        <WinButton><MinIcon /></WinButton>
        <WinButton><RestoreIcon /></WinButton>
        <WinButton><CloseIcon /></WinButton>
      </WinButtons>
    </TitleBar>
    <TabRow>
      {tabs.map(t => (
        <Tab key={t.label} $active={t.active} $mr={t.mr}>{t.label}</Tab>
      ))}
      <SearchHint><BulbIcon />操作说明搜索</SearchHint>
      <Share><ShareIcon />共享</Share>
    </TabRow>
    <Ribbon>
      <Clipboard />
      <FontGroup />
      <AlignGroup />
      <NumberGroup />
      <StylesGroup />
      <CellsGroup />
      <EditGroup />
      <Collapse><Chevron /></Collapse>
    </Ribbon>
    <QuickBar>
      <QuickSlot $w={24}><SaveIcon /></QuickSlot>
      <QuickSlot $w={32} $ml={7}><UndoIcon color={B} /></QuickSlot>
      <QuickSlot $w={8}><Caret /></QuickSlot>
      <QuickSlot $w={32} $ml={4}><UndoIcon color="#bdbdbd" flip /></QuickSlot>
      <QuickSlot $w={8}><Caret $faint /></QuickSlot>
      <QuickSlot $w={40}><MiniFit /></QuickSlot>
      <QuickSlot $w={20}><TouchIcon /></QuickSlot>
      <QuickSlot $w={24}><Caret /></QuickSlot>
      <QuickSlot $w={26}><FolderIcon /></QuickSlot>
      <QuickSlot $w={42}><CustomizeIcon /></QuickSlot>
    </QuickBar>
    <FormulaRow>
      <NameBox>B3<Caret /></NameBox>
      <Dots><i /><i /><i /></Dots>
      <FxBox><CrossMark /><CheckMark />fx</FxBox>
      <FormulaInput><UpCaret /></FormulaInput>
    </FormulaRow>
    <SheetArea>
      <Grid>
        <GridRow $head>
          <Corner><CornerMark /></Corner>
          {columns.map(c => (
            <ColHead key={c} $sel={c === 'B'}>{c}</ColHead>
          ))}
          <ColHead $w={10} />
        </GridRow>
        {rows.map(n => (
          <GridRow key={n}>
            <RowHead $sel={n === 3}>{n}</RowHead>
            <Cell>{n}</Cell>
            <Cell>
              {n <= 2 ? n : ''}
              {n === 3 && <Selection />}
            </Cell>
            {columns.slice(2).map(c => (
              <Cell key={c} />
            ))}
            <Cell $w={10} />
          </GridRow>
        ))}
      </Grid>
      <VScroll>
        <ScrollBtn><UpCaret /></ScrollBtn>
        <VThumb />
        <ScrollBtn><Caret /></ScrollBtn>
      </VScroll>
    </SheetArea>
    <TabBar>
      <SheetNav><NavArrow $left /><NavArrow /></SheetNav>
      {sheets.map(s => (
        <SheetTab key={s.name} $w={s.w} $active={s.active} $last={s.last}>{s.name}</SheetTab>
      ))}
      <AddSheet>+</AddSheet>
      <SplitDots><i /><i /><i /></SplitDots>
      <HScroll>
        <ScrollBtn $w={18} $h={20}><NavArrow $left /></ScrollBtn>
        <HThumb />
        <ScrollBtn $w={18} $h={20}><NavArrow /></ScrollBtn>
      </HScroll>
    </TabBar>
    <StatusBar>
      <Ready>就绪</Ready>
      <Display><MonitorIcon />显示器设置</Display>
      <ViewBtn $on><NormalView /></ViewBtn>
      <ViewBtn><PageView /></ViewBtn>
      <ViewBtn><BreakView /></ViewBtn>
      <ZoomSign $w={24}>−</ZoomSign>
      <Slider />
      <ZoomSign $w={22}>+</ZoomSign>
      <ZoomValue>250%</ZoomValue>
    </StatusBar>
    <RedFrame />
    <ImeBar>
      <ImeBars />
      <ImeChar>英</ImeChar>
      <ImeIcon $ml={0}><Moon size={24} strokeWidth={1.2} color="#111" /></ImeIcon>
      <ImeIcon $ml={16}><Settings size={26} strokeWidth={1.2} color="#111" /></ImeIcon>
    </ImeBar>
    <Watermark>
      <MarkLogo>
        <MarkLatin>Bai</MarkLatin>
        <PawMark />
        <MarkCjk>经验</MarkCjk>
      </MarkLogo>
      <MarkUrl>jingyan.baidu.com</MarkUrl>
    </Watermark>
  </Page>
);

export default App;
